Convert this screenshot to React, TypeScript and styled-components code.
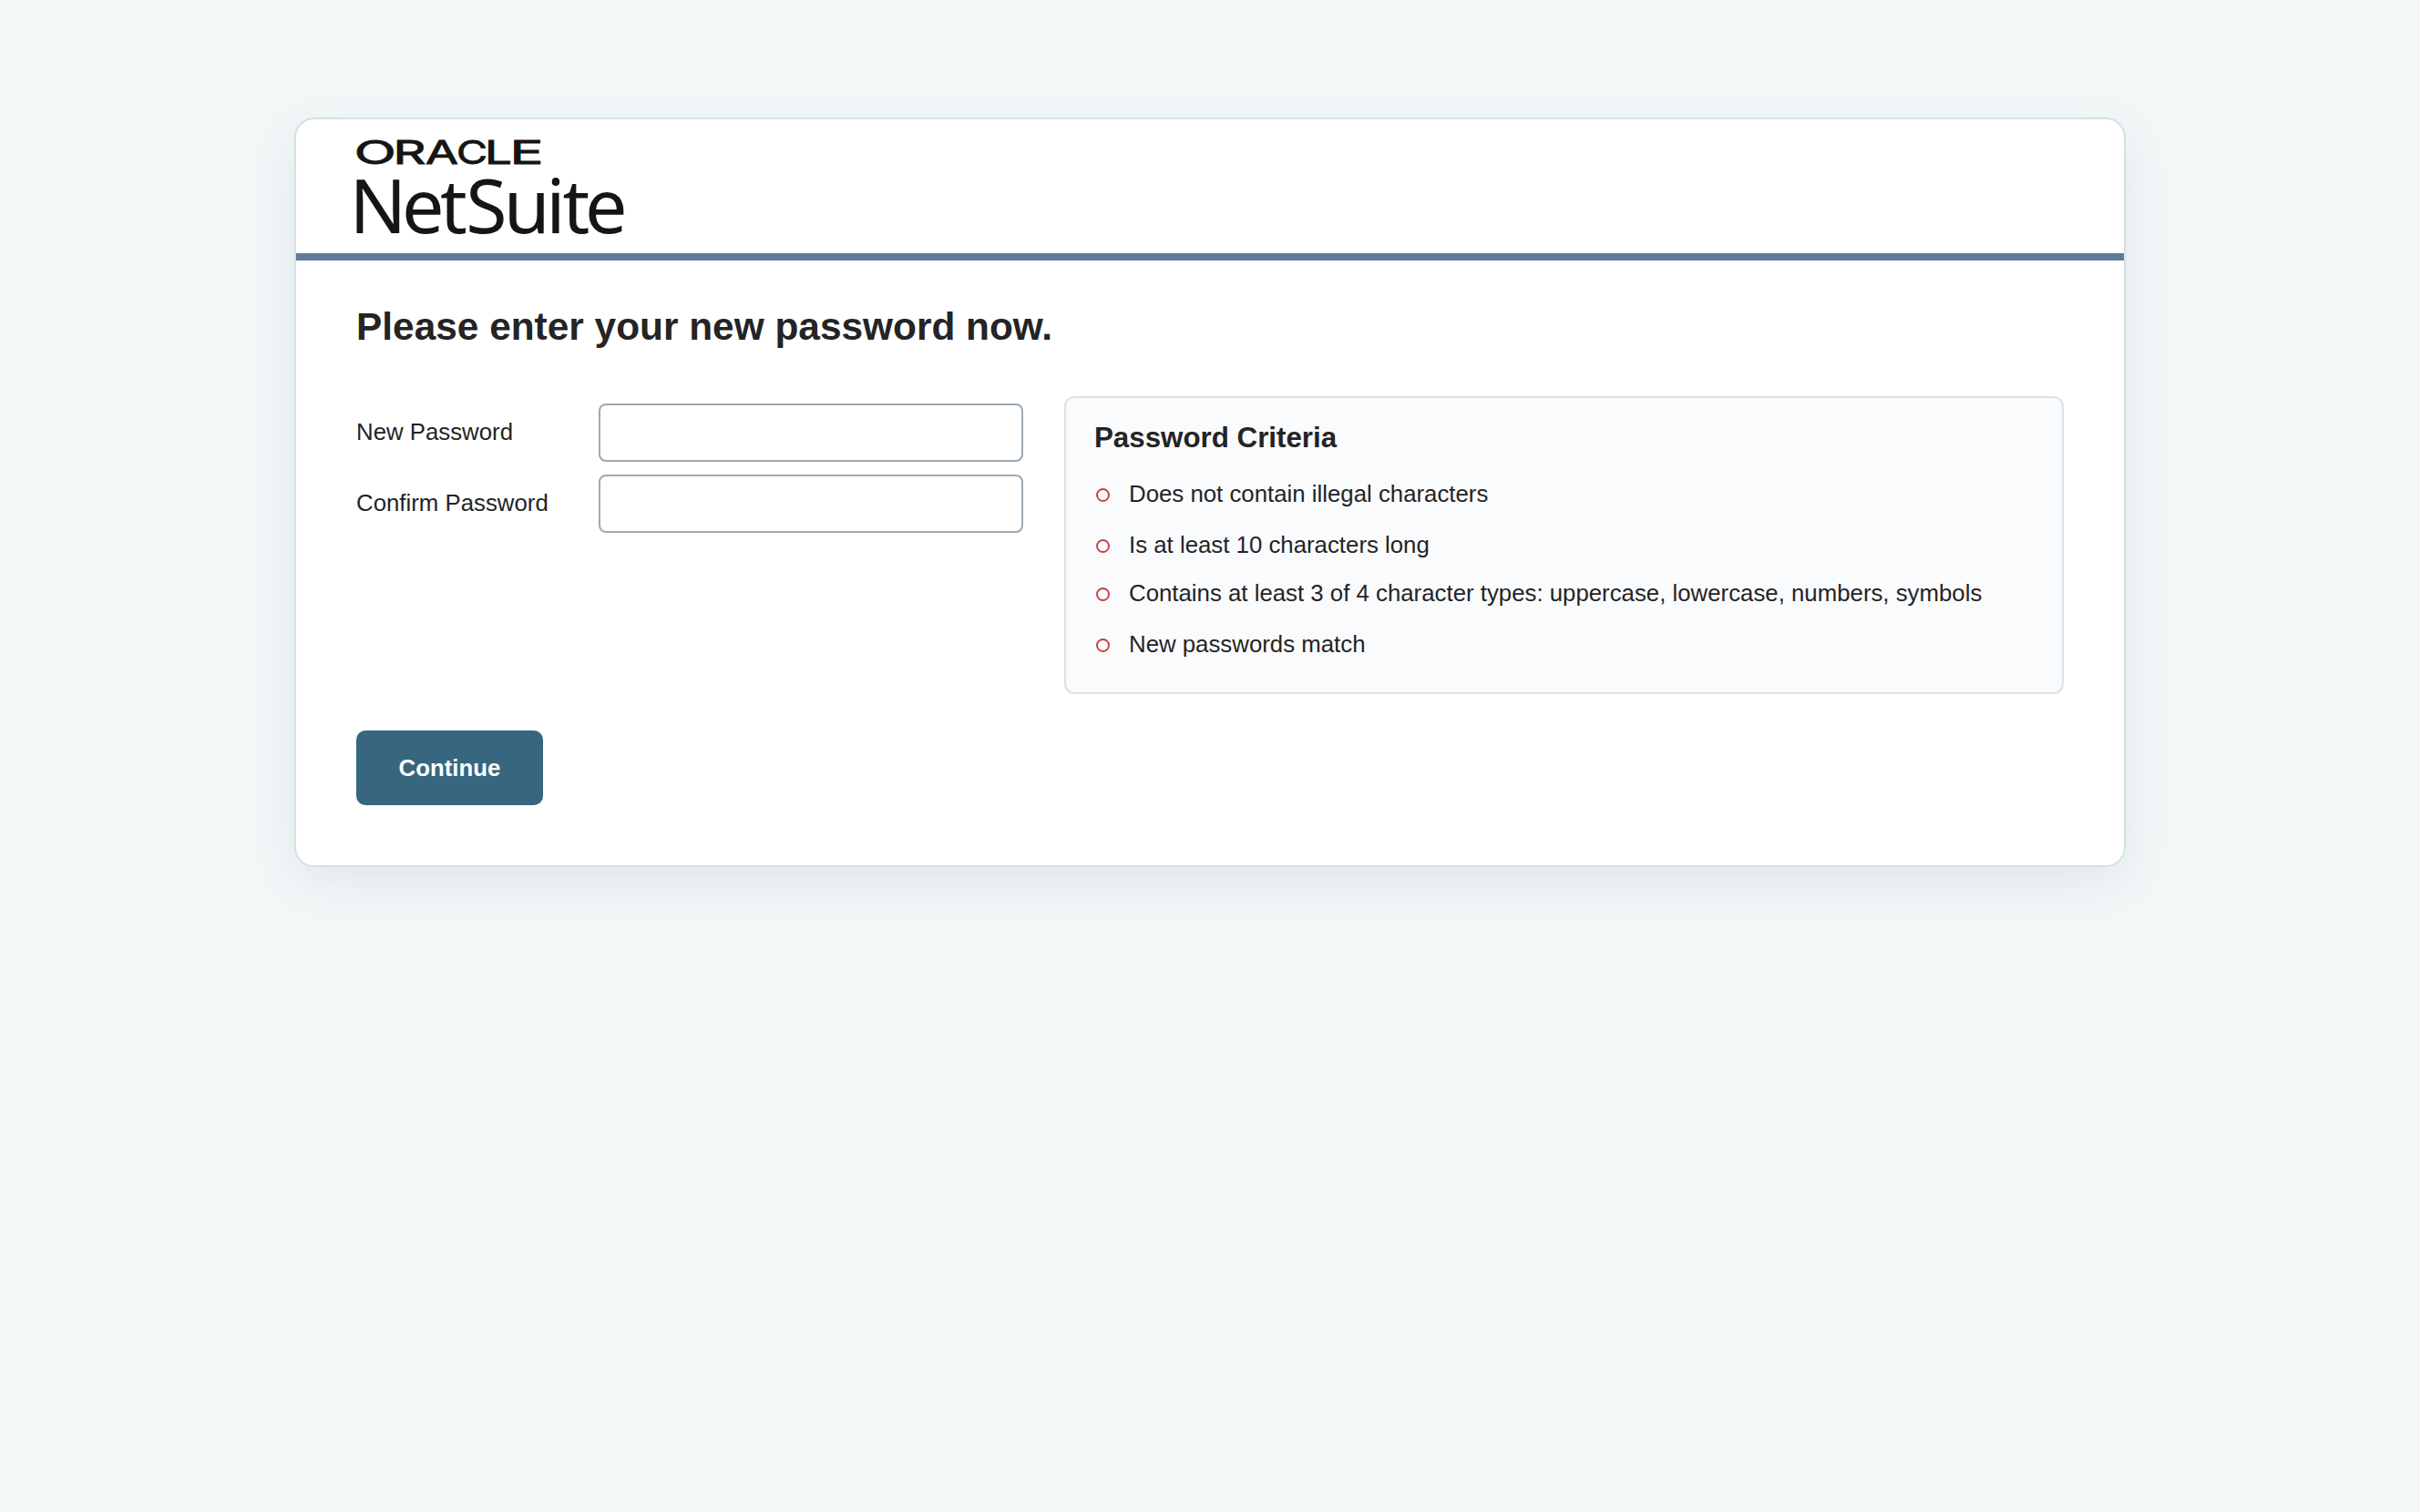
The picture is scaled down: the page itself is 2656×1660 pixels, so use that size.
import styled, { createGlobalStyle } from "styled-components";

const criteria = [
 { text: "Does not contain illegal characters", height: 56 },
 { text: "Is at least 10 characters long", height: 56 },
 {
  text: "Contains at least 3 of 4 character types: uppercase, lowercase, numbers, symbols",
  height: 50,
 },
 { text: "New passwords match", height: 62 },
];

// every letter of the wordmark is stretched to its own width
const oracleLetters = [
 { letter: "O", x: -2.2, width: 46 },
 { letter: "R", x: 40.5, width: 36 },
 { letter: "A", x: 76, width: 36 },
 { letter: "C", x: 110, width: 34 },
 { letter: "L", x: 141, width: 30 },
 { letter: "E", x: 168.5, width: 37 },
];

const Logo = () => (
 <StyledLogo viewBox="0 0 300 110" role="img" aria-label="Oracle NetSuite">
  <OracleText y="30.6">
   {oracleLetters.map(({ letter, x, width }) => (
    <tspan key={letter} x={x} textLength={width} lengthAdjust="spacingAndGlyphs">
     {letter}
    </tspan>
   ))}
  </OracleText>
  <NetSuiteText x="-7.5 49.9 92 120.2 161.7 208.3 226.5 251" y="106.5">
   NetSuite
  </NetSuiteText>
 </StyledLogo>
);

const App = () => {
 return (
  <Page>
   <GlobalStyle />
   <Card>
    <Header>
     <Logo />
    </Header>
    <Content>
     <Title>Please enter your new password now.</Title>
     <Columns>
      <Fields>
       <Field>
        <Label htmlFor="new-password">New Password</Label>
        <Input id="new-password" type="password" />
       </Field>
       <Field>
        <Label htmlFor="confirm-password">Confirm Password</Label>
        <Input id="confirm-password" type="password" />
       </Field>
      </Fields>
      <Criteria>
       <CriteriaTitle>Password Criteria</CriteriaTitle>
       <CriteriaList>
        {criteria.map(({ text, height }) => (
         <Criterion key={text} $height={height}>
          <Ring />
          {text}
         </Criterion>
        ))}
       </CriteriaList>
      </Criteria>
     </Columns>
     <Button type="button">Continue</Button>
    </Content>
   </Card>
  </Page>
 );
};
export default App;

const GlobalStyle = createGlobalStyle`
 * {
  box-sizing: border-box;
 }
 body {
  margin: 0;
  background: #f3f7f8;
  color: #242424;
  font-family: "Liberation Sans", Arial, sans-serif;
  font-size: 25.8px;
 }
`;

const Page = styled.main`
 min-height: 100vh;
 padding-top: 129px;
`;

const Card = styled.section`
 width: 2010px;
 height: 823px;
 margin: 0 auto;
 overflow: hidden;
 background: #fff;
 border: 2px solid #d5e0e5;
 border-radius: 22px;
 box-shadow: 0 16px 54px rgba(40, 75, 95, 0.09);
`;

const Header = styled.header`
 height: 155px;
 padding: 18px 66px 0;
 border-bottom: 8px solid #5f7b99;
`;

const StyledLogo = styled.svg`
 display: block;
 width: 300px;
 height: 110px;
 overflow: visible;
 fill: #161513;
`;

const OracleText = styled.text`
 font-family: Inter, sans-serif;
 font-size: 36px;
 stroke: #161513;
 stroke-width: 0.9px;
`;

const NetSuiteText = styled.text`
 font-family: "Noto Sans", sans-serif;
 font-size: 82.5px;
`;

const Content = styled.div`
 padding: 49px 66px 0;
`;

const Title = styled.h1`
 margin: 0;
 font-size: 42.4px;
 line-height: 48px;
`;

const Columns = styled.div`
 display: grid;
 grid-template-columns: 733px 1097px;
 column-gap: 44px;
 margin-top: 52px;
`;

const Fields = styled.div`
 display: flex;
 flex-direction: column;
 gap: 14px;
 padding-top: 8px;
`;

const Field = styled.div`
 display: flex;
 align-items: center;
`;

const Label = styled.label`
 width: 266px;
 padding-bottom: 2px;
`;

const Input = styled.input`
 width: 466px;
 height: 64px;
 padding: 0 16px;
 font: inherit;
 background: #fff;
 border: 2px solid #9caab5;
 border-radius: 8px;
 outline: none;
`;

const Criteria = styled.aside`
 height: 327px;
 padding: 26px 31px 0;
 background: #fafbfd;
 border: 2px solid #dbe3e7;
 border-radius: 11px;
`;

const CriteriaTitle = styled.h2`
 margin: 0;
 font-size: 31.3px;
 line-height: 36px;
`;

const CriteriaList = styled.ul`
 margin: 15px 0 0;
 padding: 0;
 list-style: none;
`;

const Criterion = styled.li<{ $height: number }>`
 display: flex;
 align-items: center;
 gap: 21px;
 height: ${({ $height }) => $height}px;
 white-space: nowrap;
`;

const Ring = styled.span`
 width: 15px;
 height: 15px;
 margin: 2px 0 0 2px;
 border: 2px solid #c44545;
 border-radius: 50%;
`;

const Button = styled.button`
 display: block;
 width: 205px;
 height: 82px;
 margin-top: 40px;
 padding: 0;
 color: #fff;
 background: #36677f;
 border: 0;
 border-radius: 10px;
 font: inherit;
 font-weight: 700;
`;
